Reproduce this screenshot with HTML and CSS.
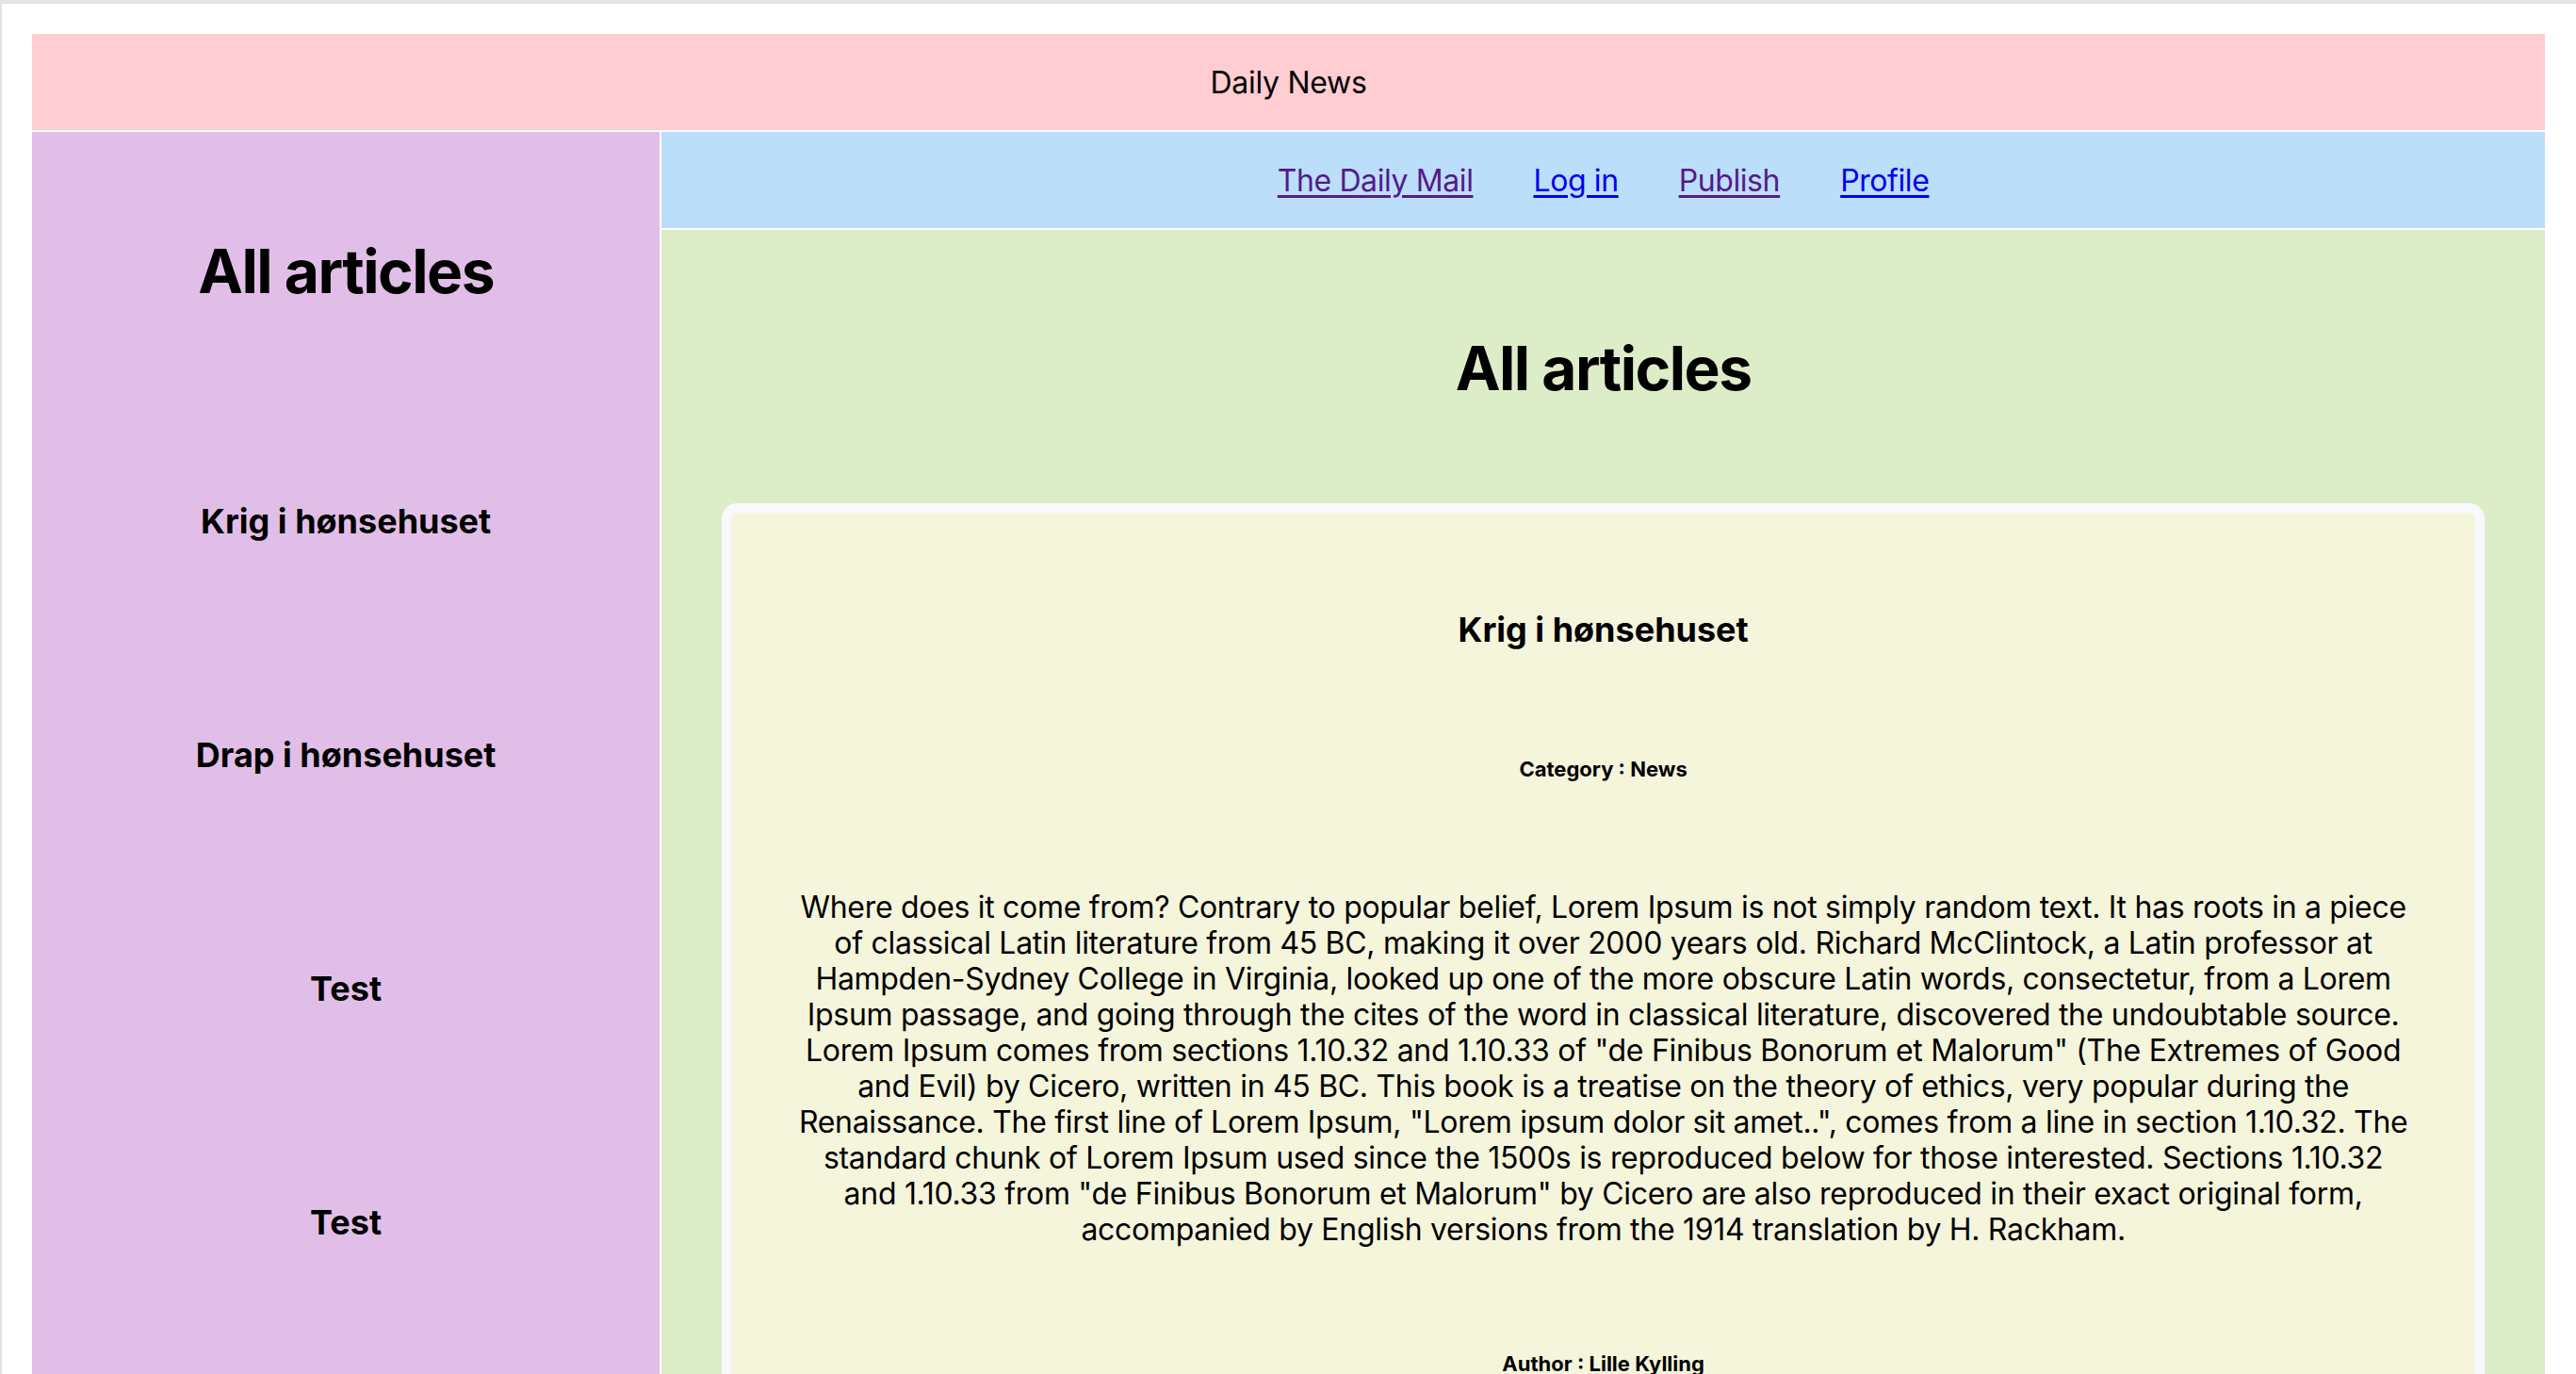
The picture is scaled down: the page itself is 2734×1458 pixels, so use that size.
FILE: index.html
```html
<!DOCTYPE html>
<html lang="en">
<head>
<meta charset="utf-8">
<title>Daily News</title>
<link rel="stylesheet" href="styles.css">
</head>
<body>
<div class="frame">
  <div class="page">
    <header class="masthead">Daily News</header>
    <aside class="sidebar">
      <h1 class="side-title">All articles</h1>
      <ul class="side-list">
        <li class="side-item">Krig i hønsehuset</li>
        <li class="side-item">Drap i hønsehuset</li>
        <li class="side-item">Test</li>
        <li class="side-item">Test</li>
      </ul>
    </aside>
    <nav class="topnav">
      <a class="nav-link visited" href="#home">The Daily Mail</a>
      <a class="nav-link" href="#login">Log in</a>
      <a class="nav-link visited" href="#publish">Publish</a>
      <a class="nav-link" href="#profile">Profile</a>
    </nav>
    <main class="main">
      <h1 class="main-title">All articles</h1>
      <article class="card">
        <h3 class="card-title">Krig i hønsehuset</h3>
        <h6 class="card-meta card-cat">Category : News</h6>
        <p class="card-body">Where does it come from? Contrary to popular belief, Lorem Ipsum is not simply random text. It has roots in a piece of classical Latin literature from 45 BC, making it over 2000 years old. Richard McClintock, a Latin professor at Hampden-Sydney College in Virginia, looked up one of the more obscure Latin words, consectetur, from a Lorem Ipsum passage, and going through the cites of the word in classical literature, discovered the undoubtable source. Lorem Ipsum comes from sections 1.10.32 and 1.10.33 of "de Finibus Bonorum et Malorum" (The Extremes of Good and Evil) by Cicero, written in 45 BC. This book is a treatise on the theory of ethics, very popular during the Renaissance. The first line of Lorem Ipsum, "Lorem ipsum dolor sit amet..", comes from a line in section 1.10.32. The standard chunk of Lorem Ipsum used since the 1500s is reproduced below for those interested. Sections 1.10.32 and 1.10.33 from "de Finibus Bonorum et Malorum" by Cicero are also reproduced in their exact original form, accompanied by English versions from the 1914 translation by H. Rackham.</p>
        <h6 class="card-meta card-author">Author : Lille Kylling</h6>
      </article>
    </main>
  </div>
</div>
</body>
</html>
```

FILE: styles.css
```css
html, body {
  margin: 0;
  padding: 0;
  background: #ffffff;
  overflow: hidden;
}

body {
  font-family: Inter, "Noto Sans", "Liberation Sans", sans-serif;
  font-size: 32px;
  color: #000;
}

.frame {
  border-top: 4px solid #e3e3e3;
  border-left: 2px solid #e3e3e3;
  padding: 32px 33px 32px 32px;
}

.page {
  display: grid;
  grid-template-columns: 1fr 3fr;
  grid-template-rows: 102px 102px auto;
  grid-template-areas:
    "head head"
    "side nav"
    "side main";
  gap: 2px;
  background: #ffffff;
}

.masthead {
  grid-area: head;
  background: #ffcdd2;
  display: flex;
  align-items: center;
  justify-content: center;
  font-size: 32px;
  letter-spacing: -0.3px;
}

.sidebar {
  grid-area: side;
  background: #e1bee7;
  text-align: center;
}

.side-title {
  margin: 110px 0 0;
  font-size: 64px;
  line-height: 76px;
  font-weight: 700;
  letter-spacing: -1.5px;
}

.side-list {
  list-style: none;
  margin: 103px 0 0;
  padding: 0;
}

.side-item {
  height: 248px;
  display: flex;
  align-items: center;
  justify-content: center;
  font-size: 36px;
  font-weight: 700;
}

.topnav {
  grid-area: nav;
  background: #bbdefb;
  display: flex;
  align-items: center;
  justify-content: center;
  gap: 64px;
}

.nav-link {
  color: #0000ee;
  text-decoration: underline;
  text-decoration-thickness: 3px;
  text-underline-offset: 4px;
  font-size: 32px;
  letter-spacing: -0.4px;
}

.nav-link.visited {
  color: #551a8b;
}

.main {
  grid-area: main;
  background: #dcedc8;
  padding: 0 0 200px;
  text-align: center;
}

.main-title {
  margin: 109px 0 0;
  font-size: 64px;
  line-height: 76px;
  font-weight: 700;
  letter-spacing: -1.5px;
}

.card {
  margin: 105px 64px 0;
  border: 10px solid #f8f8ff;
  border-radius: 16px;
  background: #f5f5dc;
  padding: 0 68px 80px;
}

.card-title {
  margin: 104px 0 0;
  font-size: 36px;
  line-height: 40px;
  font-weight: 700;
}

.card-meta {
  font-size: 22px;
  line-height: 25px;
  font-weight: 700;
}

.card-cat {
  margin: 116px 0 0;
}

.card-body {
  margin: 115px 0 0;
  font-size: 32px;
  line-height: 38px;
  letter-spacing: -0.3px;
}

.card-author {
  margin: 111px 0 0;
}
```
